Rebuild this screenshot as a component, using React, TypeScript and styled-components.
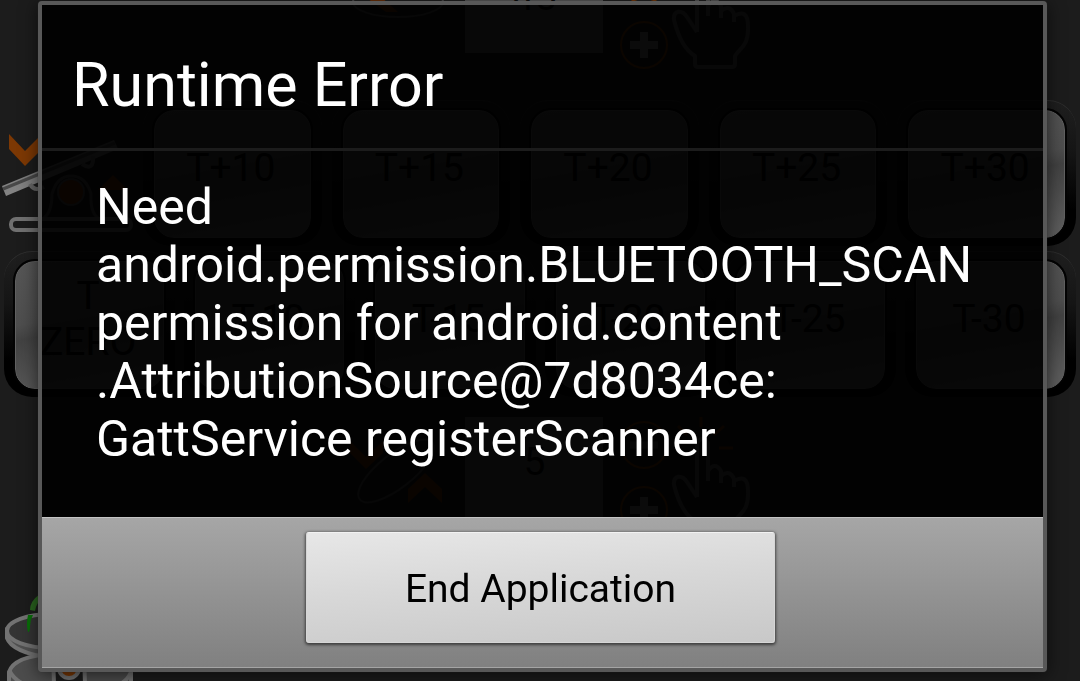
import React from "react";
import styled, { createGlobalStyle } from "styled-components";

const GlobalStyle = createGlobalStyle`
  * { box-sizing: border-box; }
  body {
    margin: 0;
    background: #1c1c1c;
    font-family: Roboto, "Liberation Sans", sans-serif;
  }
`;

const Page = styled.main`
  min-height: 100vh;
  padding: 1px 33px 9px 38px;
`;

/* The running app, dimmed while the dialog is open */
const Scene = styled.div`
  position: fixed;
  inset: 0;
  overflow: hidden;
  background: #1c1c1c;
`;

const SceneBody = styled.div`
  display: flex;
  flex-direction: column;
  margin-top: -48px;
`;

const CounterRow = styled.div`
  display: flex;
  align-items: flex-start;
  height: 120px;
  padding-left: 33%;
`;

const Drawing = styled.svg`
  display: block;
  flex: none;
  overflow: visible;
`;

const CounterValue = styled.div`
  flex: none;
  width: 138px;
  height: 101px;
  margin: 0 14px 0 19px;
  padding-top: 21px;
  background: #5c5c5c;
  color: #080808;
  font-size: 39px;
  line-height: 48px;
  text-align: center;
`;

const KeyPad = styled.div`
  display: flex;
  flex-direction: column;
  gap: 5px;
  padding: 28px 4px 20px 0;
`;

const KeyRow = styled.div<{ $full?: boolean }>`
  display: flex;
  gap: ${(p) => (p.$full ? 9 : 10)}px;
  padding-left: ${(p) => (p.$full ? 4 : 0)}px;
`;

const KeyBezel = styled.div`
  flex: 1 1 0;
  min-width: 0;
  height: 146px;
  padding: 9px 11px 8px;
  border-radius: 28px;
  border-top: 1px solid #303030;
  background: linear-gradient(#1f1f1f, #151515 35%, #000 75%);
`;

const KeyCap = styled.div`
  display: flex;
  align-items: center;
  justify-content: center;
  height: 128px;
  padding: 0 3px 12px 0;
  border: 1px solid #606060;
  border-radius: 20px;
  outline: 2px solid #030303;
  background: linear-gradient(170deg, #565656, #4e4e4e 42%, #424242 52%, #606060);
  color: #000;
  font-size: 39px;
  line-height: 46px;
  text-align: center;
`;

const BottomArt = styled.div`
  padding-top: 57px;
`;

const Dialog = styled.section`
  position: relative;
  border: 4px solid #585858;
  border-radius: 4px;
  background: rgba(0, 0, 0, 0.91);
  box-shadow: 0 0 1px #303030, 0 3px 18px rgba(0, 0, 0, 0.6);
  color: #fff;
`;

const DialogTitle = styled.h1`
  margin: 0;
  padding: 45px 30px 28px;
  border-bottom: 3px solid #1c1c1c;
  font-size: 61px;
  font-weight: 400;
  line-height: 70px;
`;

const Message = styled.p`
  margin: 0;
  padding: 27px 48px 49px 54px;
  font-size: 50px;
  line-height: 58px;
  overflow-wrap: break-word;
`;

const Footer = styled.footer`
  display: flex;
  justify-content: center;
  padding: 14px 4px 24px 0;
  border-top: 1px solid #c4c4c4;
  border-bottom: 1px solid #a4a4a4;
  background: linear-gradient(#a6a6a6, #808080);
`;

const EndButton = styled.button`
  width: 47%;
  height: 111px;
  padding: 2px 16px 0;
  border: 1px solid #d6d6d6;
  border-top-color: #f2f2f2;
  border-radius: 3px;
  background: linear-gradient(176deg, #e7e7e7, #d8d8d8 45%, #c8c8c8);
  box-shadow: 0 1px 3px 1px rgba(0, 0, 0, 0.55);
  color: #000;
  font-family: inherit;
  font-size: 39px;
  line-height: 46px;
`;

const ORANGE = "#7c3804";
const RUST = "#6e2e04";

const TiltedDial = ({ flat }: { flat?: boolean }) => (
  <Drawing width="90" height="120" viewBox="0 0 90 120" fill="none">
    {flat ? (
      <>
        <ellipse cx="42" cy="50" rx="45" ry="15" stroke="#4c4c4c" strokeWidth="2" />
        <path d="M8 44 L30 60 L42 60 L24 44Z" fill={RUST} />
      </>
    ) : (
      <>
        <ellipse cx="40" cy="54" rx="46" ry="17" transform="rotate(-38 40 54)" stroke="#4c4c4c" strokeWidth="2" />
        <path d="M-6 24 L10 40 L27 24 V36 L10 52 L-6 36Z" fill={RUST} />
        <path d="M52 86 L69 70 L86 86 V72 L69 56 L52 72Z" fill={RUST} />
      </>
    )}
  </Drawing>
);

const StepButtons = () => (
  <Drawing width="56" height="120" viewBox="0 0 56 120" fill="none">
    <circle cx="27" cy="28" r="23" stroke={ORANGE} strokeWidth="2" />
    <path d="M13 28h28" stroke="#555" strokeWidth="7" />
    <circle cx="27" cy="93" r="23" stroke={ORANGE} strokeWidth="2" />
    <path d="M13 93h28M27 80v26" stroke="#777" strokeWidth="8" />
  </Drawing>
);

const TapHand = () => (
  <Drawing width="78" height="120" viewBox="0 0 78 120" fill="none">
    <path
      d="M24 80 V26 Q29 18 35 26 V64 M35 54 Q42 44 48 54 V66 M48 59 Q57 52 61 62 V70 M61 64 Q75 56 75 74 C76 94 67 96 62 104 V112 Q62 115 59 115 H25 Q22 115 22 112 V104 C12 98 5 84 1 68 C0 58 9 57 14 65 L24 80"
      stroke="#5a5a5a"
      strokeWidth="4"
      strokeLinejoin="round"
    />
    <path d="M46 31h14M41 18l10-9M28 10V0M14 18L5 9" stroke={RUST} strokeWidth="3" />
  </Drawing>
);

const Counter = ({ value, flat }: { value: string; flat?: boolean }) => (
  <CounterRow>
    <TiltedDial flat={flat} />
    <CounterValue>{value}</CounterValue>
    <StepButtons />
    <TapHand />
  </CounterRow>
);

const SeesawArt = () => (
  <Drawing width="133" height="146" viewBox="0 0 133 146" fill="none">
    <defs>
      <linearGradient id="plank" x1="0" y1="1" x2="1" y2="0">
        <stop offset="0" stopColor="#858585" />
        <stop offset="1" stopColor="#666" />
      </linearGradient>
    </defs>
    <path d="M9 34 L25 51 L41 35 V50 L25 66 L9 49Z" fill={ORANGE} />
    <path d="M98 90 L113 75 L128 90Z" fill={RUST} />
    <path d="M2 86 L114 40 L118 49 L6 96Z" fill="url(#plank)" />
    <path d="M3 89 L115 43" stroke="#484848" strokeWidth="3" />
    <path d="M30 84 Q34 92 44 87 M82 64 Q94 72 93 56" stroke="#666" strokeWidth="4" />
    <circle cx="71" cy="92" r="13" fill={RUST} stroke="#4c4c4c" strokeWidth="2" />
    <path d="M44 118 Q52 112 52 94 Q57 76 71 76 Q86 76 91 94 Q90 112 98 118" stroke="#505050" strokeWidth="3" />
    <rect x="11" y="119" width="120" height="11" rx="5" stroke="#707070" strokeWidth="4" />
  </Drawing>
);

const ScaleArt = () => (
  <Drawing width="133" height="88" viewBox="0 0 133 88" fill="none">
    <path d="M7 36 V44 Q12 58 50 64 V50Z" fill="#505050" stroke="#727272" strokeWidth="4" />
    <ellipse cx="52" cy="37" rx="45" ry="17" stroke="#727272" strokeWidth="4" fill="#343434" />
    <path d="M40 0 Q30 7 30 16 L35 17 Q36 9 44 3Z" fill="#2a641f" />
    <path d="M28 21 Q26 30 28 38 Q30 38 30 32 Q30 26 33 21Z" fill="#087008" />
    <path d="M9 90 V78 Q14 62 53 60 L54 90Z" fill="#4c4c4c" stroke="#727272" strokeWidth="4" />
    <path d="M9 76 Q14 86 24 90" stroke="#727272" strokeWidth="4" />
    <path d="M85 90 L84 60 Q126 60 131 78 V90Z" fill="#4c4c4c" stroke="#727272" strokeWidth="4" />
    <path d="M131 78 Q128 86 120 90" stroke="#727272" strokeWidth="4" />
    <circle cx="69" cy="74" r="10" fill={ORANGE} stroke="#727272" strokeWidth="4" />
  </Drawing>
);

const Key = ({ children }: { children: React.ReactNode }) => (
  <KeyBezel>
    <KeyCap>{children}</KeyCap>
  </KeyBezel>
);

export default function App() {
  return (
    <>
      <GlobalStyle />
      <Scene aria-hidden="true">
        <SceneBody>
          <Counter value="45" flat />
          <KeyPad>
            <KeyRow>
              <SeesawArt />
              {["T+10", "T+15", "T+20", "T+25", "T+30"].map((k) => (
                <Key key={k}>{k}</Key>
              ))}
            </KeyRow>
            <KeyRow $full>
              <Key>
                T<br />
                ZERO
              </Key>
              {["T-10", "T-15", "T-20", "T-25", "T-30"].map((k) => (
                <Key key={k}>{k}</Key>
              ))}
            </KeyRow>
          </KeyPad>
          <Counter value="5" />
          <BottomArt>
            <ScaleArt />
          </BottomArt>
        </SceneBody>
      </Scene>
      <Page>
        <Dialog role="alertdialog" aria-labelledby="dialog-title" aria-describedby="dialog-message">
          <DialogTitle id="dialog-title">Runtime Error</DialogTitle>
          <Message id="dialog-message">
            Need
            <br />
            android.permission.BLUETOOTH_SCAN
            <br />
            permission for android.content
            <br />
            .AttributionSource@7d8034ce:
            <br />
            GattService registerScanner
          </Message>
          <Footer>
            <EndButton type="button">End Application</EndButton>
          </Footer>
        </Dialog>
      </Page>
    </>
  );
}
